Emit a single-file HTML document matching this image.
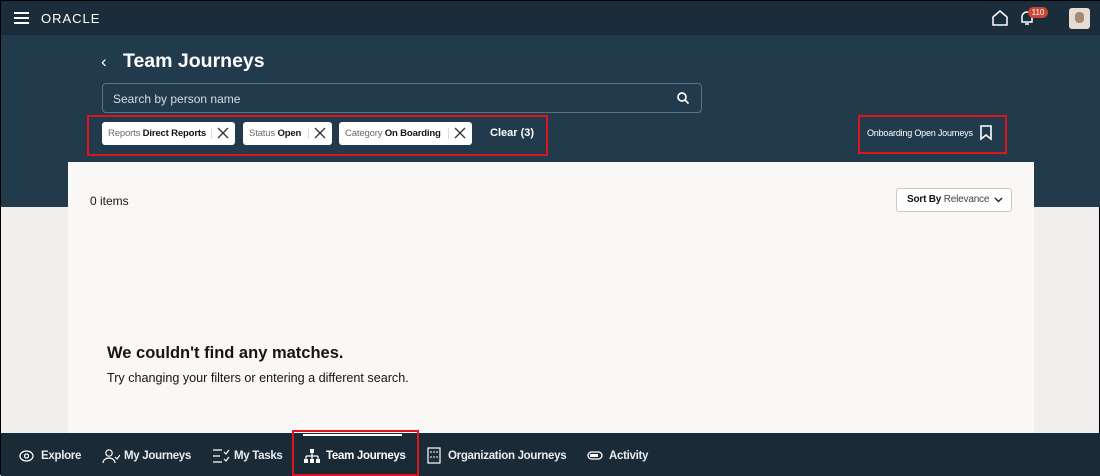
<!DOCTYPE html>
<html><head><style>
*{box-sizing:border-box;margin:0;padding:0}
body{width:1100px;height:475px;overflow:hidden;font-family:"Liberation Sans",sans-serif;background:#f1efed;position:relative;border:1px solid #000}
.hdr{position:absolute;left:0;top:0;width:1100px;height:34px;background:#1b2d3b}
.ban{position:absolute;left:0;top:34px;width:1100px;height:172px;background:#213a4c}
.card{position:absolute;left:67px;top:161px;width:966px;height:272px;background:#f9f8f6}
.nav{position:absolute;left:0;top:432px;width:1100px;height:43px;background:#1b2a37;color:#e8ecef;font-size:11.5px;letter-spacing:-0.3px}
.red{position:absolute;border:2px solid #e0141e}
.chip{position:absolute;top:121px;height:23px;background:#fff;border-radius:3px;font-size:9.6px;letter-spacing:-0.2px;color:#161513;line-height:23px;padding-left:6px}
.chip .l{color:#6f6b67}
.x{position:absolute;top:0;width:24px;height:23px}
.x:before{content:"";position:absolute;left:0;top:6px;height:11px;border-left:1px solid #ddd}
.ni{position:absolute;top:17px;font-weight:bold}
</style></head><body>
<div class="hdr">
 <div style="position:absolute;left:13px;top:11px;width:15px;height:2px;background:#fff;box-shadow:0 5px 0 #fff,0 10px 0 #fff"></div>
 <div style="position:absolute;left:40px;top:10px;color:#fff;font-size:13px;letter-spacing:1px">ORACLE</div>
 <svg style="position:absolute;left:990px;top:8px" width="18" height="18" viewBox="0 0 18 18"><path d="M2 8 L9 2 L16 8 V16 H2 Z" fill="none" stroke="#fff" stroke-width="1.5"/></svg>
 <svg style="position:absolute;left:1018px;top:9px" width="16" height="16" viewBox="0 0 16 16"><path d="M3 12 V7 a5 5 0 0 1 10 0 V12 H3 Z M6 14 h4" fill="none" stroke="#fff" stroke-width="1.5"/></svg>
 <div style="position:absolute;left:1027px;top:6px;width:20px;height:11px;background:#c74634;border-radius:6px;color:#fff;font-size:8px;text-align:center;line-height:11px">110</div>
 <div style="position:absolute;left:1068px;top:7px;width:21px;height:21px;background:#e8dcd2;border-radius:3px"><div style="margin:4px auto;width:9px;height:11px;background:#a68a74;border-radius:4px"></div></div>
</div>
<div class="ban">
 <div style="position:absolute;left:100px;top:17px;color:#fff;font-size:17px">‹</div>
 <div style="position:absolute;left:122px;top:15px;color:#fff;font-size:19.5px;font-weight:bold">Team Journeys</div>
 <div style="position:absolute;left:101px;top:48px;width:600px;height:30px;border:1px solid #5d7384;border-radius:4px;background:#213a4c">
  <span style="position:absolute;left:10px;top:8px;color:#d5dde3;font-size:12px">Search by person name</span>
  <svg style="position:absolute;left:573px;top:7px" width="14" height="14" viewBox="0 0 14 14"><circle cx="6" cy="6" r="4" fill="none" stroke="#fff" stroke-width="1.7"/><path d="M9 9 L12.5 12.5" stroke="#fff" stroke-width="1.7"/></svg>
 </div>
</div>
<div class="card">
 <div style="position:absolute;left:22px;top:32px;font-size:12px;color:#161513">0 items</div>
 <div style="position:absolute;left:828px;top:26px;width:116px;height:24px;border:1px solid #cbc7c3;border-radius:3px;background:#fff;font-size:10px;letter-spacing:-0.2px;line-height:22px;padding-left:10px;color:#161513"><b>Sort By</b> <span style="color:#444">Relevance</span>
 <svg style="position:absolute;right:8px;top:8px" width="9" height="6"><path d="M1 1 L4.5 4.5 L8 1" fill="none" stroke="#222" stroke-width="1.4"/></svg></div>
 <div style="position:absolute;left:39px;top:182px;font-size:16.5px;font-weight:bold;color:#161513">We couldn't find any matches.</div>
 <div style="position:absolute;left:39px;top:209px;font-size:12.6px;color:#161513">Try changing your filters or entering a different search.</div>
</div>
<div class="chip" style="left:101px;width:133px"><span class="l">Reports</span> <b>Direct Reports</b><div class="x" style="left:109px"><svg width="24" height="23"><path d="M7 6 L17 16 M17 6 L7 16" stroke="#333" stroke-width="1.3"/></svg></div></div>
<div class="chip" style="left:242px;width:89px"><span class="l">Status</span> <b>Open</b><div class="x" style="left:65px"><svg width="24" height="23"><path d="M7 6 L17 16 M17 6 L7 16" stroke="#333" stroke-width="1.3"/></svg></div></div>
<div class="chip" style="left:338px;width:133px"><span class="l">Category</span> <b>On Boarding</b><div class="x" style="left:109px"><svg width="24" height="23"><path d="M7 6 L17 16 M17 6 L7 16" stroke="#333" stroke-width="1.3"/></svg></div></div>
<div style="position:absolute;left:489px;top:126px;color:#fff;font-size:11px;font-weight:bold">Clear (3)</div>
<div class="red" style="left:86px;top:114px;width:461px;height:41px"></div>
<div style="position:absolute;left:866px;top:127px;color:#fff;font-size:9px;letter-spacing:-0.2px">Onboarding Open Journeys</div>
<svg style="position:absolute;left:978px;top:124px" width="14" height="16"><path d="M2 1 H12 V14 L7 10 L2 14 Z" fill="none" stroke="#fff" stroke-width="1.6"/></svg>
<div class="red" style="left:857px;top:114px;width:149px;height:39px"></div>
<div class="nav">
 <svg style="position:absolute;left:18px;top:17px" width="15" height="12"><ellipse cx="7.5" cy="6" rx="6.5" ry="5" fill="none" stroke="#fff" stroke-width="1.3"/><circle cx="7.5" cy="6" r="2" fill="none" stroke="#fff" stroke-width="1.3"/></svg>
 <span class="ni" style="left:40px">Explore</span>
 <svg style="position:absolute;left:101px;top:15px" width="18" height="16"><circle cx="7" cy="5" r="3.2" fill="none" stroke="#fff" stroke-width="1.2"/><path d="M1 15 a6 5 0 0 1 12 0 M13 9 l2 2 l3 -4" fill="none" stroke="#fff" stroke-width="1.2"/></svg>
 <span class="ni" style="left:123px">My Journeys</span>
 <svg style="position:absolute;left:211px;top:15px" width="18" height="16"><path d="M1 2 H10 M1 8 H8 M1 14 H10 M12 4 l2 2 l3 -4 M12 11 l2 2 l3 -4" fill="none" stroke="#fff" stroke-width="1.2"/></svg>
 <span class="ni" style="left:233px">My Tasks</span>
 <div style="position:absolute;left:302px;top:1px;width:99px;height:2px;background:#fff"></div>
 <svg style="position:absolute;left:303px;top:15px" width="16" height="16"><rect x="6" y="1" width="4" height="4" fill="#fff"/><path d="M8 5 V8 M2 8 H14 M2 8 V11 M8 8 V11 M14 8 V11" stroke="#fff" stroke-width="1.2" fill="none"/><rect x="0" y="11" width="4" height="4" fill="#fff"/><rect x="6" y="11" width="4" height="4" fill="#fff"/><rect x="12" y="11" width="4" height="4" fill="#fff"/></svg>
 <span class="ni" style="left:325px;color:#fff">Team Journeys</span>
 <svg style="position:absolute;left:426px;top:14px" width="14" height="17"><rect x="1" y="1" width="12" height="15" fill="none" stroke="#fff" stroke-width="1.2"/><path d="M4 4 v2 M7 4 v2 M10 4 v2 M4 9 v2 M7 9 v2 M10 9 v2" stroke="#fff"/></svg>
 <span class="ni" style="left:447px">Organization Journeys</span>
 <svg style="position:absolute;left:586px;top:18px" width="16" height="9"><rect x="1" y="1" width="14" height="7" rx="3.5" fill="none" stroke="#fff" stroke-width="1.3"/><rect x="3" y="3" width="8" height="3" fill="#fff"/></svg>
 <span class="ni" style="left:608px">Activity</span>
</div>
<div class="red" style="left:291px;top:429px;width:127px;height:46px"></div>
</body></html>
